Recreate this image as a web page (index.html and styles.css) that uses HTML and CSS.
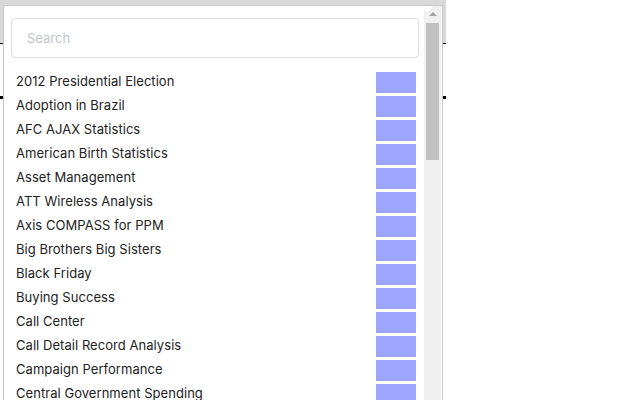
FILE: index.html
```html
<!DOCTYPE html>
<html>
<head>
<meta charset="utf-8">
<link rel="stylesheet" href="styles.css">
</head>
<body>
<div class="page">
  <div class="toolbar"></div>
  <div class="rule"></div>
</div>
<div class="popup">
  <div class="arrow"></div>
  <div class="main">
    <input class="search" type="text" placeholder="Search">
    <ul class="list">
      <li class="row"><span class="label">2012 Presidential Election</span><span class="bar"></span></li>
      <li class="row"><span class="label">Adoption in Brazil</span><span class="bar"></span></li>
      <li class="row"><span class="label">AFC AJAX Statistics</span><span class="bar"></span></li>
      <li class="row"><span class="label">American Birth Statistics</span><span class="bar"></span></li>
      <li class="row"><span class="label">Asset Management</span><span class="bar"></span></li>
      <li class="row"><span class="label">ATT Wireless Analysis</span><span class="bar"></span></li>
      <li class="row"><span class="label">Axis COMPASS for PPM</span><span class="bar"></span></li>
      <li class="row"><span class="label">Big Brothers Big Sisters</span><span class="bar"></span></li>
      <li class="row"><span class="label">Black Friday</span><span class="bar"></span></li>
      <li class="row"><span class="label">Buying Success</span><span class="bar"></span></li>
      <li class="row"><span class="label">Call Center</span><span class="bar"></span></li>
      <li class="row"><span class="label">Call Detail Record Analysis</span><span class="bar"></span></li>
      <li class="row"><span class="label">Campaign Performance</span><span class="bar"></span></li>
      <li class="row"><span class="label">Central Government Spending</span><span class="bar"></span></li>
    </ul>
  </div>
  <div class="scrollbar">
    <div class="up"></div>
    <div class="thumb"></div>
  </div>
</div>
</body>
</html>
```
FILE: styles.css
```css
html, body {
  margin: 0;
  padding: 0;
  width: 640px;
  height: 400px;
  overflow: hidden;
  background: #fff;
  font-family: Inter, "Open Sans", sans-serif;
}
.page {
  width: 446px;
}
.toolbar {
  height: 43px;
  background: #d9d9d9;
  border-bottom: 1px solid #000;
}
.rule {
  margin-top: 52px;
  height: 3px;
  background: #000;
}
.popup {
  position: absolute;
  left: 3px;
  top: 5px;
  width: 438px;
  height: 394px;
  overflow: hidden;
  background: #fff;
  border: 1px solid #c8c8c8;
  border-bottom: none;
  border-radius: 2px 2px 0 0;
  display: flex;
}
.arrow {
  position: absolute;
  left: 418px;
  top: 0;
  width: 9px;
  height: 9px;
  margin-top: -6px;
  background: #fff;
  border-left: 1px solid #c8c8c8;
  border-top: 1px solid #c8c8c8;
  transform: rotate(45deg);
}
.main {
  width: 420px;
  padding: 12px 0 0 7px;
  box-sizing: border-box;
}
.search {
  display: block;
  box-sizing: border-box;
  width: 408px;
  height: 40px;
  margin: 0;
  padding: 0 0 0 15px;
  border: 1px solid #dcdcdc;
  border-radius: 4px;
  font-family: inherit;
  font-size: 13px;
  color: #333;
  outline: none;
}
.search::placeholder {
  color: #c3c6cc;
}
.list {
  list-style: none;
  margin: 14px 0 0 5px;
  padding: 0;
  width: 400px;
}
.row {
  display: flex;
  align-items: center;
  height: 21px;
  margin-bottom: 3px;
}
.label {
  flex: 1;
  font-size: 13px;
  line-height: 16px;
  padding-bottom: 4px;
  letter-spacing: 0.05px;
  color: #222;
}
.bar {
  width: 40px;
  height: 21px;
  background: #9ea5ff;
}
.scrollbar {
  width: 17px;
  background: #f0f0f0;
  display: flex;
  flex-direction: column;
  align-items: center;
}
.up {
  margin-top: 6px;
  width: 0;
  height: 0;
  border-left: 4px solid transparent;
  border-right: 4px solid transparent;
  border-bottom: 4px solid #a3a3a3;
}
.thumb {
  margin-top: 7px;
  width: 13px;
  height: 137px;
  background: #c1c1c1;
}
```
